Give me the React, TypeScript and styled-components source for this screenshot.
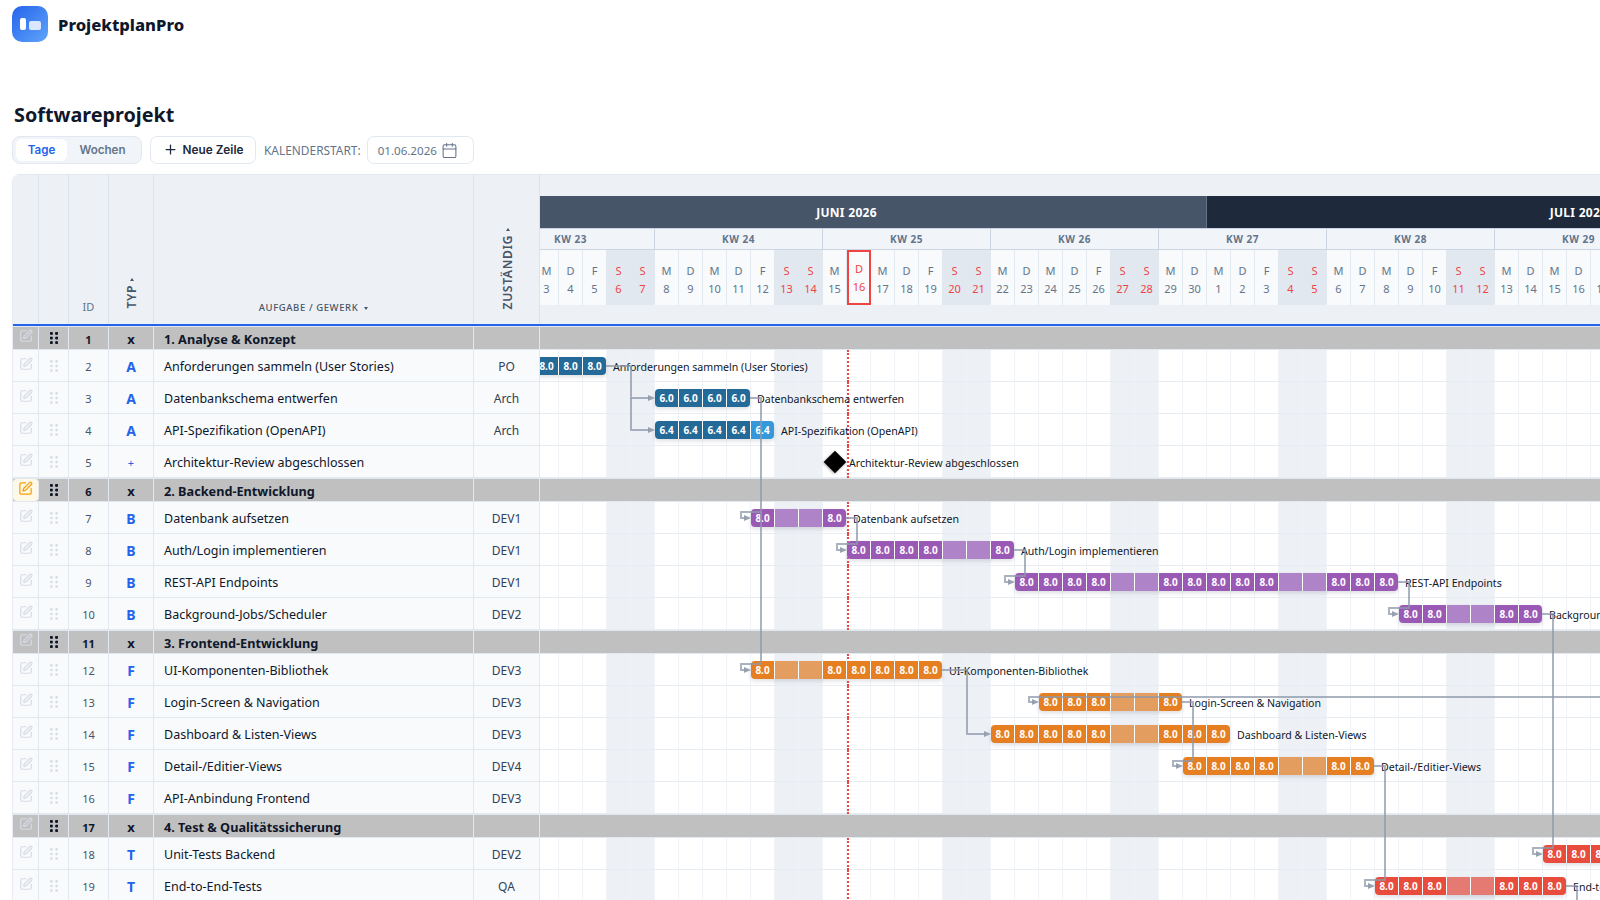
import React from 'react';
import styled, { createGlobalStyle } from 'styled-components';
import { Calendar, Plus, SquarePen } from 'lucide-react';

const DAY = 24;
const ORIGIN_X = 487;
const ORIGIN_Y = 326;
const TODAY = 15;
const DAY_COUNT = 61;
const NAMES = ['M', 'D', 'M', 'D', 'F', 'S', 'S'];

type Tone = 'blue' | 'purple' | 'orange' | 'red';

interface Bar {
  start: number;
  length: number;
  hours: string;
  tone: Tone;
  accentLast?: boolean;
}

interface Row {
  id: number;
  type: string;
  name: string;
  who?: string;
  section?: boolean;
  active?: boolean;
  bar?: Bar;
  milestone?: number;
}

const ROWS: Row[] = [
  { id: 1, type: 'x', name: '1. Analyse & Konzept', section: true },
  { id: 2, type: 'A', name: 'Anforderungen sammeln (User Stories)', who: 'PO', bar: { start: 0, length: 5, hours: '8.0', tone: 'blue' } },
  { id: 3, type: 'A', name: 'Datenbankschema entwerfen', who: 'Arch', bar: { start: 7, length: 4, hours: '6.0', tone: 'blue' } },
  { id: 4, type: 'A', name: 'API-Spezifikation (OpenAPI)', who: 'Arch', bar: { start: 7, length: 5, hours: '6.4', tone: 'blue', accentLast: true } },
  { id: 5, type: '+', name: 'Architektur-Review abgeschlossen', milestone: 14 },
  { id: 6, type: 'x', name: '2. Backend-Entwicklung', section: true, active: true },
  { id: 7, type: 'B', name: 'Datenbank aufsetzen', who: 'DEV1', bar: { start: 11, length: 4, hours: '8.0', tone: 'purple' } },
  { id: 8, type: 'B', name: 'Auth/Login implementieren', who: 'DEV1', bar: { start: 15, length: 7, hours: '8.0', tone: 'purple' } },
  { id: 9, type: 'B', name: 'REST-API Endpoints', who: 'DEV1', bar: { start: 22, length: 16, hours: '8.0', tone: 'purple' } },
  { id: 10, type: 'B', name: 'Background-Jobs/Scheduler', who: 'DEV2', bar: { start: 38, length: 6, hours: '8.0', tone: 'purple' } },
  { id: 11, type: 'x', name: '3. Frontend-Entwicklung', section: true },
  { id: 12, type: 'F', name: 'UI-Komponenten-Bibliothek', who: 'DEV3', bar: { start: 11, length: 8, hours: '8.0', tone: 'orange' } },
  { id: 13, type: 'F', name: 'Login-Screen & Navigation', who: 'DEV3', bar: { start: 23, length: 6, hours: '8.0', tone: 'orange' } },
  { id: 14, type: 'F', name: 'Dashboard & Listen-Views', who: 'DEV3', bar: { start: 21, length: 10, hours: '8.0', tone: 'orange' } },
  { id: 15, type: 'F', name: 'Detail-/Editier-Views', who: 'DEV4', bar: { start: 29, length: 8, hours: '8.0', tone: 'orange' } },
  { id: 16, type: 'F', name: 'API-Anbindung Frontend', who: 'DEV3' },
  { id: 17, type: 'x', name: '4. Test & Qualitätssicherung', section: true },
  { id: 18, type: 'T', name: 'Unit-Tests Backend', who: 'DEV2', bar: { start: 44, length: 8, hours: '8.0', tone: 'red' } },
  { id: 19, type: 'T', name: 'End-to-End-Tests', who: 'QA', bar: { start: 37, length: 8, hours: '8.0', tone: 'red' } },
];

const TONES: Record<Tone, { solid: string; light: string }> = {
  blue: { solid: '#246a99', light: '#6ea0c2' },
  purple: { solid: '#9b59b6', light: '#af83c7' },
  orange: { solid: '#e67e22', light: '#e39d5f' },
  red: { solid: '#e74c3c', light: '#e57a72' },
};

// connector routes, in page coordinates
const LINKS = [
  'M606 366H631V398H649',
  'M631 398V430H649',
  'M750 398H761V512H741V518H746',
  'M761 512V664H741V670H746',
  'M846 518H857V544H837V550H842',
  'M1014 550H1025V576H1005V582H1010',
  'M1398 582H1409V608H1389V614H1394',
  'M1542 614H1553V848H1533V854H1538',
  'M942 670H967V734H985',
  'M1620 697H1029V702H1034',
  'M1182 702H1193V761H1173V766H1178',
  'M1374 766H1385V880H1365V886H1370',
  'M1566 886H1577V910',
];

const ARROWS = [
  [655, 398], [655, 430], [751, 518], [751, 670], [847, 550], [1015, 582],
  [1399, 614], [1543, 854], [991, 734], [1039, 702], [1183, 766], [1375, 886],
];

const isWeekend = (day: number) => day % 7 === 5 || day % 7 === 6;
const dayDate = (day: number) => (day < 30 ? day + 1 : day - 29);

const GlobalStyle = createGlobalStyle`
  html, body {
    margin: 0;
    height: 100%;
    overflow: hidden;
    background: #fff;
    font-family: "Noto Sans", "Liberation Sans", sans-serif;
    color: #0f172a;
  }
`;

const Page = styled.div`
  width: 1600px;
  height: 900px;
  overflow: hidden;
  padding-left: 12px;
  box-sizing: border-box;
`;

const Brand = styled.header`
  display: flex;
  align-items: center;
  gap: 10px;
  height: 36px;
  padding-top: 6px;
`;

const LogoMark = styled.div`
  width: 36px;
  height: 36px;
  border-radius: 10px;
  background: linear-gradient(135deg, #2563eb, #60a5fa);
  display: flex;
  align-items: center;
  gap: 3px;
  padding-left: 8px;
  box-sizing: border-box;
`;

const LogoBarTall = styled.span`
  width: 6px;
  height: 12px;
  border-radius: 2px;
  background: #fff;
`;

const LogoBarWide = styled.span`
  width: 12px;
  height: 9px;
  margin-top: 2px;
  border-radius: 2px;
  background: #dbe7ff;
`;

const BrandName = styled.div`
  font-size: 16.6px;
  font-weight: 800;
  color: #0f172a;
`;

const Title = styled.h1`
  margin: 58px 0 0 2px;
  font-size: 19.8px;
  line-height: 30px;
  font-weight: 700;
  color: #0f172a;
`;

const Toolbar = styled.div`
  display: flex;
  align-items: center;
  height: 28px;
  margin-top: 6px;
  gap: 8px;
`;

const Segment = styled.div`
  display: flex;
  width: 130px;
  height: 28px;
  box-sizing: border-box;
  padding: 2px 3px;
  background: #f1f5f9;
  border: 1px solid #e2e8f0;
  border-radius: 8px;
`;

const SegmentItem = styled.div<{ $active?: boolean }>`
  flex: ${(p) => (p.$active ? '0 0 51px' : '1')};
  display: flex;
  align-items: center;
  justify-content: center;
  padding-bottom: 1px;
  box-sizing: border-box;
  border-radius: 6px;
  font-family: Inter, sans-serif;
  font-size: 11.6px;
  font-weight: 600;
  color: ${(p) => (p.$active ? '#2563eb' : '#64748b')};
  background: ${(p) => (p.$active ? '#fff' : 'transparent')};
`;

const AddButton = styled.div`
  display: flex;
  align-items: center;
  justify-content: center;
  gap: 5px;
  width: 106px;
  height: 28px;
  padding-bottom: 1px;
  box-sizing: border-box;
  background: #fff;
  border: 1px solid #e2e8f0;
  border-radius: 7px;
  font-family: Inter, sans-serif;
  font-size: 11.8px;
  font-weight: 600;
  color: #1e293b;
`;

const StartLabel = styled.label`
  font-size: 11.9px;
  color: #64748b;
`;

const DateField = styled.div`
  display: flex;
  align-items: center;
  gap: 4px;
  width: 107px;
  height: 28px;
  box-sizing: border-box;
  padding-left: 10px;
  margin-left: -2px;
  background: #fff;
  border: 1px solid #e2e8f0;
  border-radius: 7px;
  font-size: 11.6px;
  color: #64748b;
`;

const Board = styled.section`
  display: flex;
  margin-top: 10px;
  height: 740px;
  overflow: hidden;
  border-top: 1px solid #e2e8f0;
  border-top-left-radius: 8px;
`;

const TablePane = styled.div`
  flex: 0 0 528px;
  position: relative;
  z-index: 2;
  background: #f8fafc;
  border-left: 1px solid #e8ecf2;
  box-sizing: border-box;
`;

const COLUMNS = '26px 30px 40px 45px 320px 66px';

const HeadRow = styled.div`
  display: grid;
  grid-template-columns: ${COLUMNS};
  height: 151px;
  box-sizing: border-box;
  background: #edf0f5;
  border-bottom: 2px solid #2563eb;
`;

const HeadCell = styled.div`
  display: flex;
  align-items: flex-end;
  justify-content: center;
  padding-bottom: 10px;
  box-sizing: border-box;
  border-right: 1px solid #dde3ec;
  font-size: 11px;
  color: #64748b;
`;

const HeadLabel = styled.span`
  font-size: 9.5px;
  font-weight: 500;
  letter-spacing: 0.6px;
  color: #475569;
  line-height: 13px;
`;

const VerticalLabel = styled.span`
  writing-mode: vertical-rl;
  transform: rotate(180deg);
  font-size: 12.2px;
  font-weight: 600;
  letter-spacing: 0.6px;
  line-height: 14px;
  color: #475569;
`;

const VerticalCell = styled(HeadCell)`
  flex-direction: column;
  align-items: center;
  justify-content: flex-end;
  gap: 4px;
  padding-bottom: 15px;
  padding-left: 2px;
`;

const SortUp = styled.i`
  width: 0;
  height: 0;
  border-left: 2px solid transparent;
  border-right: 2px solid transparent;
  border-bottom: 3px solid #475569;
`;

const SortDown = styled.i`
  display: inline-block;
  width: 0;
  height: 0;
  margin-left: 6px;
  vertical-align: 1px;
  border-left: 2px solid transparent;
  border-right: 2px solid transparent;
  border-top: 3px solid #475569;
`;

const TableRow = styled.div<{ $section?: boolean }>`
  display: grid;
  grid-template-columns: ${COLUMNS};
  height: ${(p) => (p.$section ? '24px' : '32px')};
  box-sizing: border-box;
  background: ${(p) => (p.$section ? '#c0c0c0' : '#f8fafc')};
  ${(p) => (p.$section
    ? 'border-top: 1px solid #e2e8f0; border-bottom: 1px solid #e2e8f0;'
    : 'border-bottom: 1px solid #e2e8f0;')}
`;

const Cell = styled.div<{ $section?: boolean }>`
  display: flex;
  align-items: center;
  justify-content: center;
  min-width: 0;
  border-right: 1px solid #e2e8f0;
  box-sizing: border-box;
`;

const TextCell = styled(Cell)`
  padding-top: 2px;
`;

const EditCell = styled(Cell)<{ $active?: boolean }>`
  align-items: flex-start;
  padding-top: ${(p) => (p.$section ? '2px' : '7px')};
  color: ${(p) => (p.$active ? '#f59e0b' : '#d5dbe5')};
  border-radius: ${(p) => (p.$active ? '4px' : '0')};
  background: ${(p) => (p.$active ? '#fef9e7' : 'transparent')};
`;

const IdCell = styled(TextCell)`
  font-size: 11px;
  font-weight: ${(p) => (p.$section ? 700 : 400)};
  color: ${(p) => (p.$section ? '#0f172a' : '#475569')};
`;

const TypeCell = styled(TextCell)<{ $plain?: boolean }>`
  font-size: ${(p) => (p.$section ? '13px' : p.$plain ? '11px' : '14px')};
  font-weight: ${(p) => (p.$plain ? 400 : 700)};
  color: ${(p) => (p.$section ? '#0f172a' : '#2563eb')};
`;

const NameCell = styled(TextCell)`
  justify-content: flex-start;
  padding-left: 10px;
  font-size: ${(p) => (p.$section ? '12.7px' : '12.5px')};
  font-weight: ${(p) => (p.$section ? 700 : 400)};
  color: #0f172a;
  white-space: nowrap;
`;

const WhoCell = styled(TextCell)`
  font-size: 12px;
  color: #334155;
`;

const ChartPane = styled.div`
  flex: 1;
  min-width: 0;
  overflow: hidden;
`;

/* stands in for the horizontal scroll position of the chart */
const ChartTrack = styled.div`
  width: ${DAY_COUNT * DAY}px;
  margin-left: -53px;
`;

const ChartHead = styled.div`
  height: 151px;
  box-sizing: border-box;
  padding-top: 21px;
  background: #edf0f5;
  border-bottom: 2px solid #2563eb;
`;

const Months = styled.div`
  display: flex;
  height: 33px;
  border-bottom: 1px solid #cbd5e1;
  box-sizing: border-box;
`;

const Month = styled.div<{ $days: number; $dark?: boolean }>`
  width: ${(p) => p.$days * DAY}px;
  display: flex;
  align-items: center;
  justify-content: center;
  box-sizing: border-box;
  border-right: 1px solid #64748b;
  background: ${(p) => (p.$dark ? '#1e293b' : '#475569')};
  color: #fff;
  font-size: 12px;
  font-weight: 700;
  letter-spacing: 0.3px;
`;

const Weeks = styled.div`
  display: flex;
  height: 21px;
  box-sizing: border-box;
  background: #f1f5f9;
  border-bottom: 1px solid #cbd5e1;
`;

const Week = styled.div`
  flex: 0 0 ${7 * DAY}px;
  display: flex;
  align-items: center;
  justify-content: center;
  box-sizing: border-box;
  border-right: 1px solid #cbd5e1;
  font-size: 10px;
  font-weight: 700;
  letter-spacing: 0.5px;
  color: #64748b;
`;

const Days = styled.div`
  display: flex;
  height: 55px;
`;

const DayCell = styled.div<{ $weekend?: boolean; $today?: boolean }>`
  flex: 0 0 ${DAY}px;
  display: flex;
  flex-direction: column;
  align-items: center;
  justify-content: center;
  gap: 1px;
  box-sizing: border-box;
  padding-top: 4px;
  font-size: 11px;
  line-height: 17px;
  background: ${(p) => (p.$weekend ? '#e2e8f0' : '#f8fafc')};
  color: ${(p) => (p.$weekend || p.$today ? '#ef4444' : '#64748b')};
  border-right: 1px solid ${(p) => (p.$weekend ? 'transparent' : '#e2e8f0')};
  ${(p) => (p.$today ? 'border: 2px solid #ef4444; padding-top: 0;' : '')}
`;

const ChartBody = styled.div`
  position: relative;
`;

const ChartRow = styled.div<{ $section?: boolean }>`
  position: relative;
  display: flex;
  height: ${(p) => (p.$section ? '24px' : '32px')};
  box-sizing: border-box;
  background: ${(p) => (p.$section ? '#c0c0c0' : '#fff')};
  ${(p) => (p.$section
    ? 'border-top: 1px solid #e2e8f0; border-bottom: 1px solid #e2e8f0;'
    : 'border-bottom: 1px solid #e8ecf2;')}
`;

const GridCell = styled.div<{ $weekend?: boolean }>`
  flex: 0 0 ${DAY}px;
  box-sizing: border-box;
  border-right: 1px solid #f0f3f8;
  background: ${(p) => (p.$weekend ? '#edf0f5' : 'transparent')};
`;

const TodayLine = styled.div`
  position: absolute;
  top: 0;
  bottom: -1px;
  left: ${TODAY * DAY}px;
  border-left: 2px dotted #ef4444;
`;

const BarBox = styled.div<{ $day: number }>`
  position: absolute;
  top: 7px;
  left: ${(p) => p.$day * DAY}px;
  display: flex;
  gap: 1px;
  height: 18px;
  border-radius: 4px;
  overflow: hidden;
  background: #fff;
  box-shadow: 0 2px 4px rgba(15, 23, 42, 0.14);
`;

const BarCell = styled.div<{ $color: string }>`
  flex: 0 0 23px;
  display: flex;
  align-items: center;
  justify-content: center;
  background: ${(p) => p.$color};
  color: #fff;
  font-size: 10px;
  font-weight: 700;
  line-height: 18px;
`;

const BarLabel = styled.div<{ $at: number }>`
  position: absolute;
  top: 9px;
  left: ${(p) => p.$at}px;
  font-size: 10.6px;
  line-height: 16px;
  color: #0f172a;
  white-space: nowrap;
`;

const Milestone = styled.div<{ $day: number }>`
  position: absolute;
  top: 8px;
  left: ${(p) => p.$day * DAY + 4}px;
  width: 16px;
  height: 16px;
  background: #000;
  transform: rotate(45deg);
  box-shadow: 0 1px 3px rgba(0, 0, 0, 0.35);
`;

const Links = styled.svg`
  position: absolute;
  left: 0;
  top: 0;
  pointer-events: none;
  overflow: visible;
`;

function Grip ({ dark }: { dark?: boolean }): React.ReactElement {
  const fill = dark ? '#0f172a' : '#d5dbe5';

  return (
    <svg width='8' height='12' viewBox='0 0 8 12'>
      {[0, 1, 2].map((y) => [0, 1].map((x) => (
        <circle
          key={`${x}-${y}`}
          cx={1.4 + x * 5.2}
          cy={1.4 + y * 4.6}
          fill={fill}
          r={dark ? 1.6 : 1.3}
        />
      )))}
    </svg>
  );
}

function TableRows (): React.ReactElement {
  return (
    <>
      {ROWS.map((row) => (
        <TableRow
          $section={row.section}
          key={row.id}
        >
          <EditCell
            $active={row.active}
            $section={row.section}
          >
            <SquarePen size={row.active ? 15 : 14} />
          </EditCell>
          <Cell><Grip dark={row.section} /></Cell>
          <IdCell $section={row.section}>{row.id}</IdCell>
          <TypeCell
            $plain={row.type === '+'}
            $section={row.section}
          >
            {row.type}
          </TypeCell>
          <NameCell $section={row.section}>{row.name}</NameCell>
          <WhoCell>{row.who}</WhoCell>
        </TableRow>
      ))}
    </>
  );
}

function RowBar ({ bar, name }: { bar: Bar; name: string }): React.ReactElement {
  const tone = TONES[bar.tone];
  const end = (bar.start + bar.length) * DAY;

  return (
    <>
      <BarBox $day={bar.start}>
        {Array.from({ length: bar.length }, (_, i) => {
          const day = bar.start + i;
          const off = isWeekend(day);
          const accent = bar.accentLast && i === bar.length - 1;

          return (
            <BarCell
              $color={accent ? '#3498db' : off ? tone.light : tone.solid}
              key={day}
            >
              {off ? '' : bar.hours}
            </BarCell>
          );
        })}
      </BarBox>
      <BarLabel $at={end + 6}>{name}</BarLabel>
    </>
  );
}

function ChartRows (): React.ReactElement {
  const cells = Array.from({ length: DAY_COUNT }, (_, day) => day);

  return (
    <ChartBody>
      {ROWS.map((row) => (
        <ChartRow
          $section={row.section}
          key={row.id}
        >
          {!row.section && cells.map((day) => (
            <GridCell
              $weekend={isWeekend(day)}
              key={day}
            />
          ))}
          {!row.section && <TodayLine />}
          {row.bar && (
            <RowBar
              bar={row.bar}
              name={row.name}
            />
          )}
          {row.milestone !== undefined && (
            <>
              <Milestone $day={row.milestone} />
              <BarLabel $at={(row.milestone + 1) * DAY + 2}>{row.name}</BarLabel>
            </>
          )}
        </ChartRow>
      ))}
      <Links
        height={600}
        viewBox={`${ORIGIN_X} ${ORIGIN_Y} ${DAY_COUNT * DAY} 600`}
        width={DAY_COUNT * DAY}
      >
        {LINKS.map((d) => (
          <path
            d={d}
            fill='none'
            key={d}
            stroke='#8e99aa'
            strokeOpacity='0.75'
            strokeWidth='2'
          />
        ))}
        {ARROWS.map(([x, y]) => (
          <polygon
            fill='#8e99aa'
            fillOpacity='0.9'
            key={`${x}-${y}`}
            points={`${x - 7},${y - 3} ${x},${y} ${x - 7},${y + 3}`}
          />
        ))}
      </Links>
    </ChartBody>
  );
}

function ChartHeader (): React.ReactElement {
  return (
    <ChartHead>
      <Months>
        <Month $days={30}>JUNI 2026</Month>
        <Month
          $dark
          $days={31}
        >
          JULI 2026
        </Month>
      </Months>
      <Weeks>
        {[23, 24, 25, 26, 27, 28, 29, 30, 31].map((kw) => (
          <Week key={kw}>KW {kw}</Week>
        ))}
      </Weeks>
      <Days>
        {Array.from({ length: DAY_COUNT }, (_, day) => (
          <DayCell
            $today={day === TODAY}
            $weekend={isWeekend(day)}
            key={day}
          >
            <span>{NAMES[day % 7]}</span>
            <span>{dayDate(day)}</span>
          </DayCell>
        ))}
      </Days>
    </ChartHead>
  );
}

export default function App (): React.ReactElement {
  return (
    <Page>
      <GlobalStyle />
      <Brand>
        <LogoMark>
          <LogoBarTall />
          <LogoBarWide />
        </LogoMark>
        <BrandName>ProjektplanPro</BrandName>
      </Brand>
      <Title>Softwareprojekt</Title>
      <Toolbar>
        <Segment>
          <SegmentItem $active>Tage</SegmentItem>
          <SegmentItem>Wochen</SegmentItem>
        </Segment>
        <AddButton>
          <Plus
            size={15}
            strokeWidth={2}
          />
          Neue Zeile
        </AddButton>
        <StartLabel>KALENDERSTART:</StartLabel>
        <DateField>
          01.06.2026
          <Calendar
            size={17}
            strokeWidth={1.5}
          />
        </DateField>
      </Toolbar>
      <Board>
        <TablePane>
          <HeadRow>
            <HeadCell />
            <HeadCell />
            <HeadCell>ID</HeadCell>
            <VerticalCell>
              <SortUp />
              <VerticalLabel>TYP</VerticalLabel>
            </VerticalCell>
            <HeadCell>
              <HeadLabel>AUFGABE / GEWERK<SortDown /></HeadLabel>
            </HeadCell>
            <VerticalCell>
              <SortUp />
              <VerticalLabel>ZUSTÄNDIG</VerticalLabel>
            </VerticalCell>
          </HeadRow>
          <TableRows />
        </TablePane>
        <ChartPane>
          <ChartTrack>
            <ChartHeader />
            <ChartRows />
          </ChartTrack>
        </ChartPane>
      </Board>
    </Page>
  );
}
